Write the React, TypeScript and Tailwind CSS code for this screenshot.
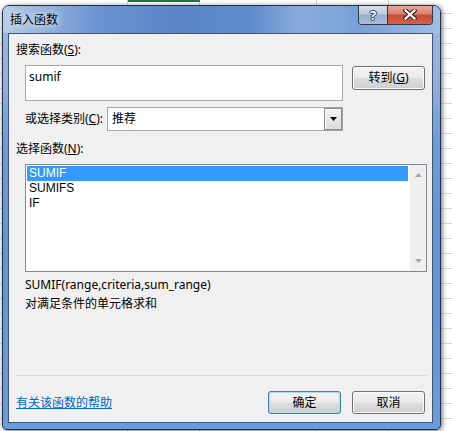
import React from "react"

// Windows 7 风格的 Excel「插入函数」对话框
type BtnProps = { children: React.ReactNode; primary?: boolean; className?: string }

function Win7Button({ children, primary = false, className = "" }: BtnProps) {
  const ring = primary
    ? "border-[#3c7fb1] shadow-[inset_0_0_0_1px_#a8dcf7]"
    : "border-[#707070] shadow-[inset_0_0_0_1px_#fbfbfb]"
  return (
    <div
      className={`flex items-center justify-center rounded-[3px] border ${ring} bg-[linear-gradient(180deg,#f3f3f3_0%,#ebebeb_48%,#dddddd_52%,#cfcfcf_100%)] text-[12px] leading-[16px] text-black ${className}`}
    >
      {children}
    </div>
  )
}

function Arrow({ up, color }: { up: boolean; color: string }) {
  return (
    <svg width="7" height="4" viewBox="0 0 7 4">
      {up ? <path d="M3.5 0 L7 4 H0 Z" fill={color} /> : <path d="M0 0 H7 L3.5 4 Z" fill={color} />}
    </svg>
  )
}

function TitleBar() {
  return (
    <div className="flex h-[27px] bg-[linear-gradient(90deg,#b7cde9_0%,#94b3de_9%,#6a93cf_22%,#5985c7_40%,#5f8dcc_57%,#8aacdb_68%,#78a0d6_82%,#a0bee6_100%)]">
      <span className="self-center pl-[7px] text-[12px] leading-[16px] text-black [text-shadow:0_0_5px_#dce8f7,0_0_8px_#dce8f7]">
        插入函数
      </span>
      <div className="ml-auto mr-[7px] -mt-px flex h-[20px] self-start overflow-hidden rounded-b-[4px] border border-t-0 border-[#2b3a50]">
        <div className="flex w-[28px] items-center justify-center bg-[linear-gradient(180deg,#dbe4ef_0%,#bccbdd_45%,#98aeca_55%,#a9bdd6_100%)]">
          <span className="text-[13px] font-bold leading-[14px] text-white [text-shadow:0_0_1px_#1b2636,1px_0_0_#3a4658,-1px_0_0_#3a4658,0_1px_0_#3a4658,0_-1px_0_#3a4658]">
            ?
          </span>
        </div>
        <div className="flex w-[45px] items-center justify-center border-l border-[#3a3038] bg-[linear-gradient(180deg,#eab3a4_0%,#d98070_45%,#c74a36_55%,#d6634c_100%)]">
          <svg width="14" height="11" viewBox="0 0 14 11">
            <path d="M2.5 1.5 L11.5 9.5 M11.5 1.5 L2.5 9.5" stroke="#3b2a2a" strokeWidth="4.4" strokeLinecap="square" />
            <path d="M2.5 1.5 L11.5 9.5 M11.5 1.5 L2.5 9.5" stroke="#ffffff" strokeWidth="2.2" strokeLinecap="square" />
          </svg>
        </div>
      </div>
    </div>
  )
}

const functions = ["SUMIF", "SUMIFS", "IF"]

export default function App() {
  return (
    <div className="h-[431px] w-[452px] overflow-hidden bg-white pl-[2px] pt-[5px] font-['Noto_Sans','Noto_Sans_CJK_SC',sans-serif] [background-image:linear-gradient(#217346,#217346),linear-gradient(90deg,transparent_127px,#d0d0d0_127px,#d0d0d0_128px,transparent_128px,transparent_199px,#d0d0d0_199px,#d0d0d0_200px,transparent_200px,transparent_316px,#d0d0d0_316px,#d0d0d0_317px,transparent_317px,transparent_388px,#d0d0d0_388px,#d0d0d0_389px,transparent_389px),repeating-linear-gradient(180deg,transparent_0px,transparent_13px,#dadada_13px,#dadada_14px,transparent_14px,transparent_15px)] [background-position:128px_0,0_0,0_0] [background-repeat:no-repeat,no-repeat,repeat] [background-size:72px_2px,100%_100%,auto]">
      <div className="flex h-[425px] w-[439px] flex-col overflow-hidden rounded-b-[5px] rounded-t-[7px] border border-[#22324a] bg-[linear-gradient(180deg,#9db8de_0%,#93b0da_18%,#6c9bd8_32%,#6195d8_60%,#6a9bdb_100%)] shadow-[1px_1px_5px_rgba(0,0,0,0.6)]">
        <TitleBar />
        <div className="flex-1 pb-[6px] pl-[5px] pr-[7px]">
          <div className="flex h-full flex-col border border-[#3b5679] bg-[#f0f0f0] text-[12px] leading-[16px] text-black">
            <div className="mt-[8px] pl-[7px]">
              搜索函数(<span className="underline">S</span>):
            </div>

            <div className="mt-[7px] flex items-start pl-[16px]">
              <div className="h-[36px] w-[318px] border border-[#a9a9a9] bg-white pl-[3px] pt-[3px]">sumif</div>
              <Win7Button className="ml-[9px] mt-px h-[24px] w-[73px]">
                转到(<span className="underline">G</span>)
              </Win7Button>
            </div>

            <div className="mt-[6px] flex items-center pl-[16px]">
              <div className="w-[82px]">
                或选择类别(<span className="underline">C</span>):
              </div>
              <div className="flex h-[24px] w-[236px] border border-[#a5a5a5] bg-white">
                <div className="flex flex-1 items-center pl-[4px]">推荐</div>
                <div className="flex w-[18px] items-center justify-center border border-[#8c8c8c] bg-[linear-gradient(180deg,#f4f4f4,#dcdcdc)] shadow-[inset_1px_1px_0_#ffffff]">
                  <Arrow up={false} color="#000000" />
                </div>
              </div>
            </div>

            <div className="mt-[10px] pl-[7px]">
              选择函数(<span className="underline">N</span>):
            </div>

            <div className="ml-[16px] mt-[7px] flex h-[108px] w-[402px] border border-[#828790] bg-white">
              <div className="flex-1 p-px font-['Liberation_Sans',sans-serif]">
                {functions.map((f, i) =>
                  i === 0 ? (
                    <div
                      key={f}
                      className="h-[15px] border border-dotted border-[#c2803e] bg-[#3399ff] pl-[1px] leading-[13px] text-white"
                    >
                      {f}
                    </div>
                  ) : (
                    <div key={f} className="h-[15px] pl-[2px] leading-[15px]">
                      {f}
                    </div>
                  )
                )}
              </div>
              <div className="flex w-[17px] flex-col items-center justify-between border-l border-[#fafafa] bg-[#efefef] py-[8px]">
                <Arrow up color="#a6a6a6" />
                <Arrow up={false} color="#a6a6a6" />
              </div>
            </div>

            <div className="mt-[3px] pl-[16px] leading-[19px]">
              <div>SUMIF(range,criteria,sum_range)</div>
              <div>对满足条件的单元格求和</div>
            </div>

            <div className="ml-[7px] mt-[62px] h-px w-[411px] bg-[#d3dde8]" />

            <div className="mr-[7px] mt-[15px] flex items-center">
              <span className="pl-[7px] text-[#0066cc] underline">有关该函数的帮助</span>
              <div className="ml-auto flex gap-[11px]">
                <Win7Button primary className="h-[23px] w-[73px]">
                  确定
                </Win7Button>
                <Win7Button className="h-[23px] w-[73px]">取消</Win7Button>
              </div>
            </div>
          </div>
        </div>
      </div>
    </div>
  )
}
